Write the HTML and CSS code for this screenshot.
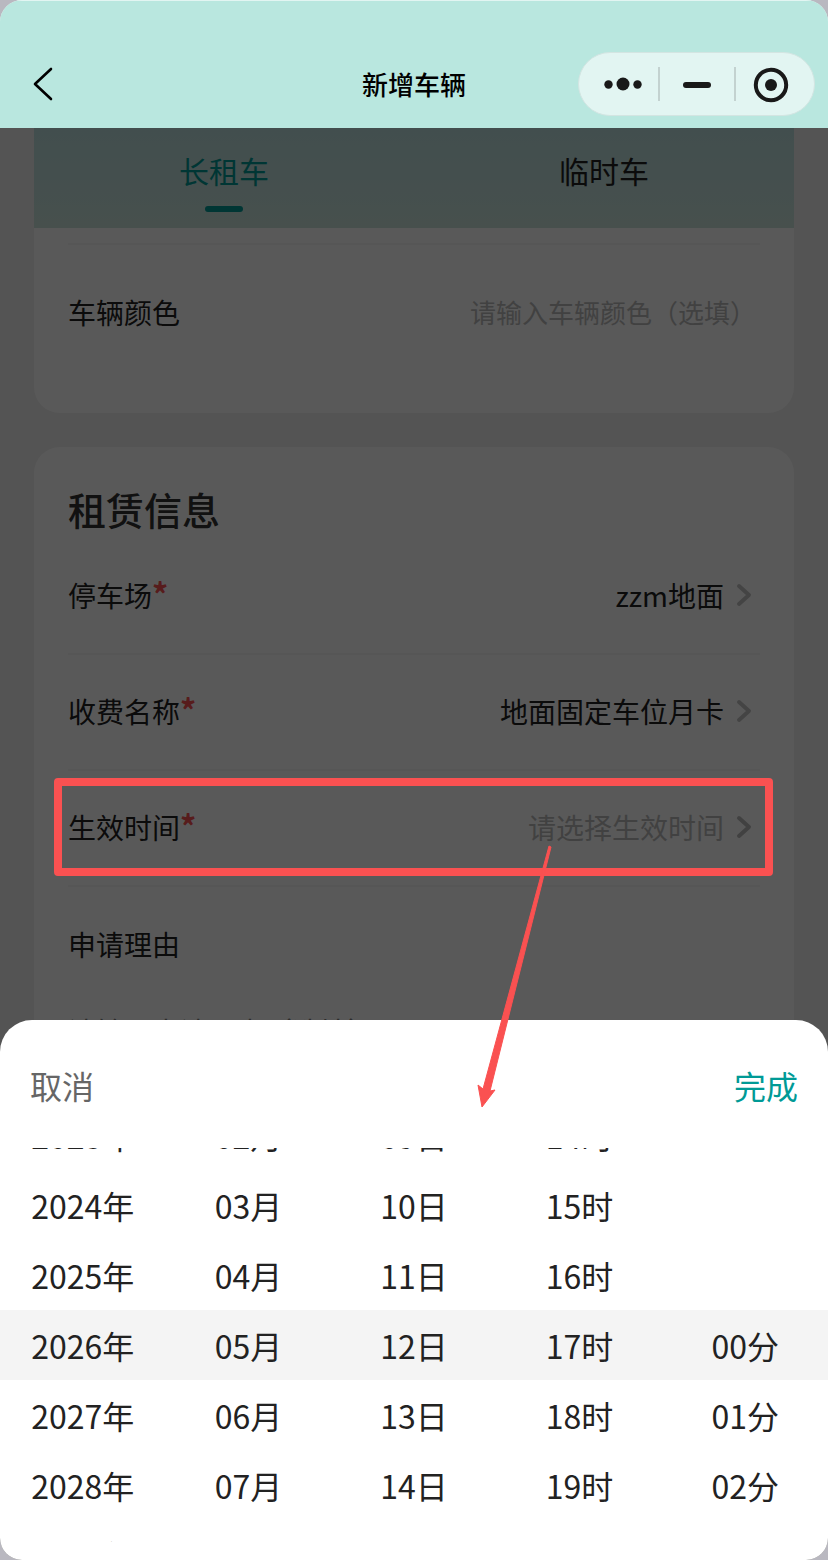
FILE: index.html
```html
<!DOCTYPE html>
<html lang="zh-CN">
<head>
  <meta charset="UTF-8">
  <meta name="viewport" content="width=device-width, initial-scale=1.0">
  <title>新增车辆</title>
  <link rel="stylesheet" href="styles.css">
</head>
<body>
  <div class="app">
    <header class="navbar">
      <button class="back" type="button" aria-label="返回">
        <svg width="24" height="40" viewBox="0 0 24 40" fill="none" stroke="#000" stroke-width="2.6" stroke-linecap="round" stroke-linejoin="round">
          <path d="M21 5 L5 20 L21 35"/>
        </svg>
      </button>
      <h1 class="navbar-title">新增车辆</h1>
      <div class="capsule">
        <button type="button" aria-label="更多">
          <svg width="40" height="40" viewBox="0 0 40 40" fill="#191919">
            <circle cx="5.500" cy="20.500" r="4.2"/>
            <circle cx="20" cy="20" r="6.500"/>
            <circle cx="34.500" cy="20.500" r="4.2"/>
          </svg>
        </button>
        <button type="button" aria-label="最小化">
          <svg width="40" height="40" viewBox="0 0 40 40" fill="#191919">
            <rect x="6" y="18" width="28" height="6" rx="3"/>
          </svg>
        </button>
        <button type="button" aria-label="关闭">
          <svg width="40" height="40" viewBox="0 0 40 40">
            <circle cx="20" cy="21" r="15.200" fill="none" stroke="#191919" stroke-width="4"/>
            <circle cx="20" cy="21" r="6" fill="#191919"/>
          </svg>
        </button>
      </div>
    </header>

    <main class="content">
      <nav class="tabs">
        <button class="tab active" type="button">长租车</button>
        <button class="tab" type="button">临时车</button>
      </nav>

      <section class="card card-vehicle">
        <div class="row">
          <label for="color">车辆颜色</label>
          <input class="field" type="text" id="color" placeholder="请输入车辆颜色（选填）">
        </div>
      </section>

      <section class="card card-rent">
        <h2 class="card-title">租赁信息</h2>
        <div class="row">
          <label for="park">停车场<span class="required">*</span></label>
          <button class="value" type="button" id="park">zzm地面
            <svg width="24" height="24" viewBox="0 0 24 24"><path d="M7 3 L17 12 L7 21"/></svg>
          </button>
        </div>
        <div class="row">
          <label for="fee">收费名称<span class="required">*</span></label>
          <button class="value" type="button" id="fee">地面固定车位月卡
            <svg width="24" height="24" viewBox="0 0 24 24"><path d="M7 3 L17 12 L7 21"/></svg>
          </button>
        </div>
        <div class="row">
          <label for="time">生效时间<span class="required">*</span></label>
          <button class="value empty" type="button" id="time">请选择生效时间
            <svg width="24" height="24" viewBox="0 0 24 24"><path d="M7 3 L17 12 L7 21"/></svg>
          </button>
        </div>
        <div class="row last">
          <label for="reason">申请理由</label>
        </div>
        <textarea class="reason" id="reason" placeholder="请输入申请理由（选填）"></textarea>
      </section>
    </main>

    <div class="mask"></div>

    <div class="sheet">
      <div class="sheet-bar">
        <button class="cancel" type="button">取消</button>
        <button class="done" type="button">完成</button>
      </div>
      <div class="picker">
        <ul class="column">
          <li>2023年</li>
          <li>2024年</li>
          <li>2025年</li>
          <li class="selected">2026年</li>
          <li>2027年</li>
          <li>2028年</li>
          <li>2029年</li>
        </ul>
        <ul class="column">
          <li>02月</li>
          <li>03月</li>
          <li>04月</li>
          <li class="selected">05月</li>
          <li>06月</li>
          <li>07月</li>
          <li>08月</li>
        </ul>
        <ul class="column">
          <li>09日</li>
          <li>10日</li>
          <li>11日</li>
          <li class="selected">12日</li>
          <li>13日</li>
          <li>14日</li>
          <li>15日</li>
        </ul>
        <ul class="column">
          <li>14时</li>
          <li>15时</li>
          <li>16时</li>
          <li class="selected">17时</li>
          <li>18时</li>
          <li>19时</li>
          <li>20时</li>
        </ul>
        <ul class="column">
          <li></li>
          <li></li>
          <li></li>
          <li class="selected">00分</li>
          <li>01分</li>
          <li>02分</li>
          <li>03分</li>
        </ul>
      </div>
    </div>

    <!-- highlight box and arrow -->
    <svg class="guide" width="828" height="1560" viewBox="0 0 828 1560">
      <rect x="58" y="782" width="711" height="90" fill="none" stroke="#fa5151" stroke-width="8" stroke-linejoin="round"/>
      <path d="M549 846 L551 847 L490 1091 L495 1090 L482 1107 L478 1085 L483 1089 Z" fill="#fa5151" stroke="#fa5151" stroke-linejoin="round"/>
    </svg>
  </div>
</body>
</html>
```

FILE: styles.css
```css
* {
  box-sizing: border-box;
}

body {
  margin: 0;
  background-color: #b9b8c0;
  color: #222;
  font-family: "Noto Sans CJK SC", sans-serif;
  font-size: 28px;
  line-height: 40px;
}

button, input, textarea {
  padding: 0;
  border: none;
  background: none;
  color: inherit;
  font: inherit;
}

button {
  cursor: pointer;
}

.app {
  position: relative;
  display: flex;
  flex-direction: column;
  height: 100vh;
  overflow: hidden;
  border-radius: 22px;
  background-color: #f0f0f0;
}

.navbar {
  display: grid;
  grid-template-columns: minmax(0, 1fr) auto minmax(0, 1fr);
  align-items: center;
  height: 128px;
  padding: 38px 13px 0;
  background-color: #b9e7df;
  border-top: 1px solid #e2f5f2;
  color: #000;
}

.back {
  display: flex;
  justify-self: start;
  margin-left: 17px;
}

.navbar-title {
  margin: 0;
  font-size: 26px;
  font-weight: 500;
}

.capsule {
  display: grid;
  grid-template-columns: 71px 76px 72px;
  justify-self: end;
  align-items: center;
  width: 237px;
  height: 64px;
  padding: 0 8px;
  border: 1px solid #d3e5e2;
  border-radius: 32px;
  background-color: #e2f5f2;
}

.capsule button {
  display: flex;
  justify-content: center;
  align-items: center;
  height: 34px;
}

.capsule button + button {
  border-left: 2px solid #c3d2d0;
}

.content {
  flex: 1;
  padding: 0 34px;
  overflow: hidden;
}

.tabs {
  display: flex;
  height: 100px;
  background: linear-gradient(#bde0e0, #cbe5dd);
}

.tab {
  display: flex;
  flex: 1;
  flex-direction: column;
  align-items: center;
  padding-top: 22px;
  font-size: 30px;
}

.tab.active {
  color: #009a96;
}

.tab.active::after {
  content: "";
  width: 38px;
  height: 6px;
  margin-top: 16px;
  border-radius: 3px;
  background-color: #009a96;
}

.card {
  padding: 0 34px;
  border-radius: 26px;
  background-color: #fff;
}

.card-vehicle {
  padding-top: 15px;
  padding-bottom: 32px;
  margin-bottom: 34px;
  border-radius: 0 0 26px 26px;
}

.card-vehicle .row {
  height: 138px;
  border-top: 2px solid #f5f5f5;
  border-bottom: none;
}

.card-title {
  margin: 0;
  padding: 38px 0 6px;
  color: #333;
  font-size: 38px;
  font-weight: 500;
  line-height: 48px;
}

.row {
  display: flex;
  justify-content: space-between;
  align-items: center;
  height: 116px;
  padding: 0 4px 2px 0;
  border-bottom: 2px solid #f5f5f5;
}

.row.last {
  border-bottom: none;
}

.required {
  color: #fa5151;
  font-size: 32px;
  font-weight: 700;
  line-height: 1;
}

.field {
  flex: 1;
  min-width: 0;
  font-size: 26px;
  text-align: right;
}

.field::placeholder {
  color: #bbb;
}

.reason::placeholder {
  color: #808080;
}

.value {
  display: flex;
  align-items: center;
  gap: 8px;
}

.value svg {
  fill: none;
  stroke: #c4c4c4;
  stroke-width: 4;
  stroke-linecap: round;
  stroke-linejoin: round;
}

.value.empty {
  color: #bbb;
}

.value.empty svg {
  stroke: #bbb;
}

.reason {
  display: block;
  width: 100%;
  height: 160px;
  padding-top: 8px;
  resize: none;
}

.mask {
  position: absolute;
  inset: 128px 0 0;
  background-color: rgba(0, 0, 0, 0.65);
}

.sheet {
  position: absolute;
  right: 0;
  bottom: 0;
  left: 0;
  padding-bottom: 18px;
  border-radius: 32px 32px 0 0;
  background-color: #fff;
}

.sheet-bar {
  display: flex;
  justify-content: space-between;
  align-items: center;
  height: 128px;
  padding: 2px 30px 0;
  font-size: 32px;
}

.cancel {
  color: #666;
}

.done {
  color: #009a96;
}

.picker {
  display: flex;
  align-items: center;
  height: 394px;
  overflow: hidden;
}

.column {
  flex: 1;
  margin: 0;
  padding: 0;
  list-style: none;
  font-size: 32px;
  line-height: 70px;
  text-align: center;
}

.column li {
  height: 70px;
}

.column .selected {
  background-color: #f4f4f4;
}

.guide {
  position: absolute;
  top: 0;
  left: 0;
  pointer-events: none;
}
```
